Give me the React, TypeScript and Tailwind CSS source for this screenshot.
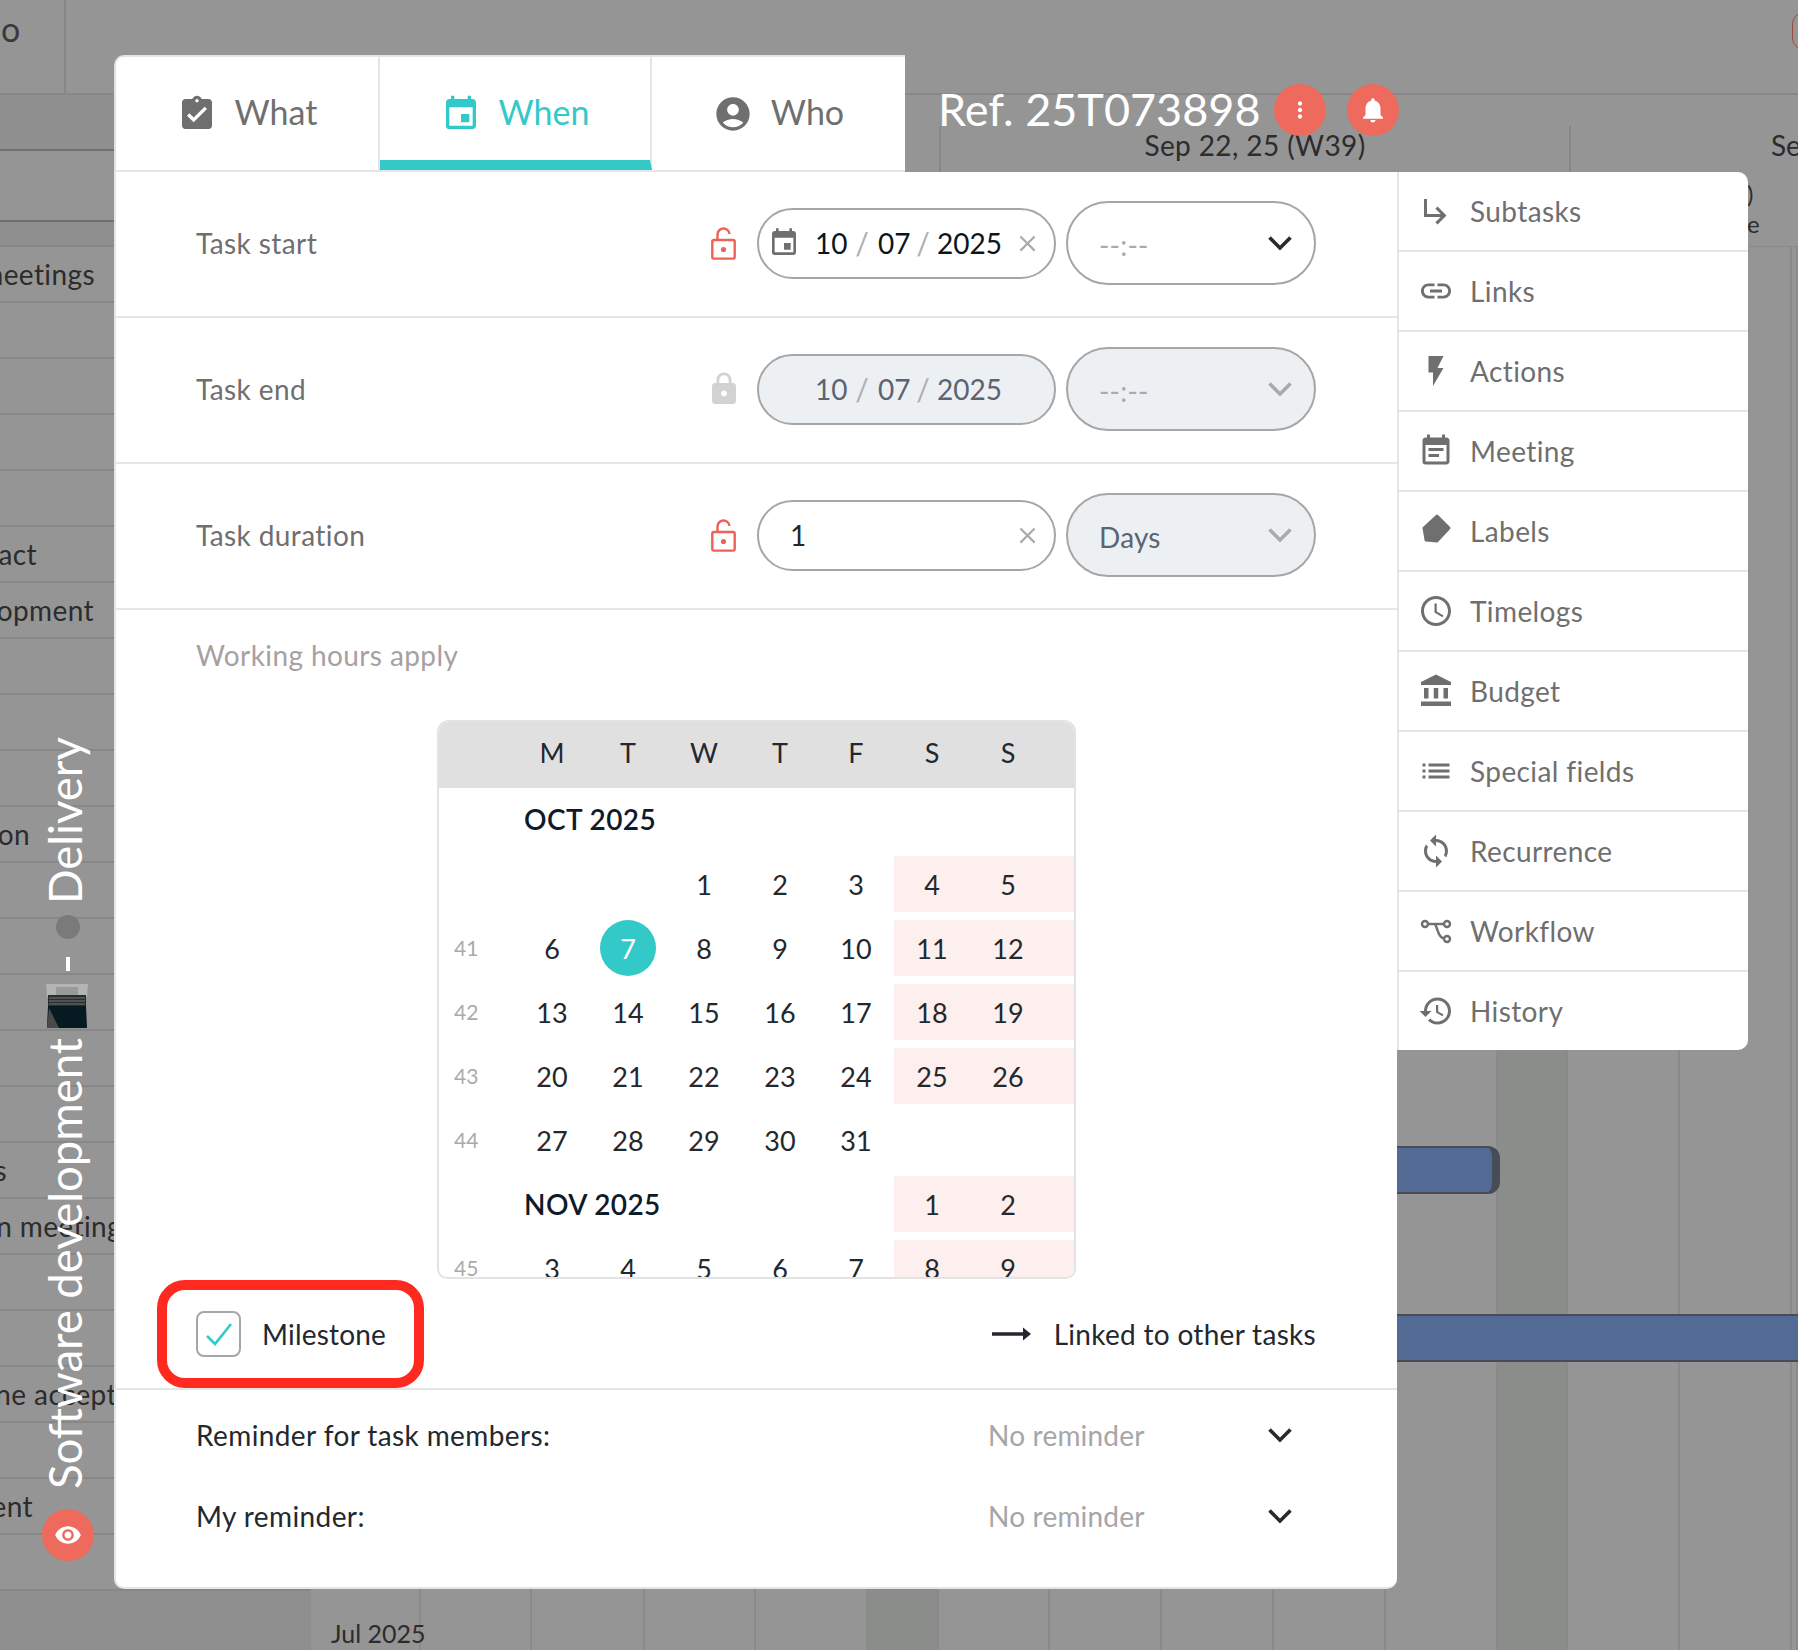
import React from "react";
import {
  MdAssignmentTurnedIn, MdEvent, MdAccountCircle, MdLock, MdSubdirectoryArrowRight, MdLink, MdFlashOn,
  MdEventNote, MdAccessTime, MdAccountBalance, MdList, MdSync, MdHistory, MdMoreVert, MdNotifications,
  MdVisibility, MdClose,
} from "react-icons/md";

const Chevron = ({ c = "#2b2b2b" }: { c?: string }) => (
  <svg width="26" height="18" viewBox="0 0 26 18" fill="none" className="shrink-0">
    <path d="M2.5 3.5 L13 14 L23.5 3.5" stroke={c} strokeWidth="3.6" />
  </svg>
);

const LockOpen = () => (
  <svg width="25" height="33" viewBox="0 0 25 33" fill="none" className="shrink-0">
    <path d="M6.5 13 V8 a6 6 0 0 1 12 -1" stroke="#ee6154" strokeWidth="2.4" />
    <rect x="1.3" y="13" width="22.4" height="18.6" rx="1.6" stroke="#ee6154" strokeWidth="2.4" />
    <circle cx="12.5" cy="22.5" r="2.6" fill="#ee6154" />
  </svg>
);

const LabelIcon = () => (
  <svg width="36" height="36" viewBox="0 0 36 36">
    <path d="M19 3 L31 15 L19 28 L8 27 L6 15 Z" fill="#6f6f6f" stroke="#6f6f6f" strokeWidth="3" strokeLinejoin="round" />
  </svg>
);

const WorkflowIcon = () => (
  <svg width="36" height="36" viewBox="0 0 36 36" fill="none" stroke="#6f6f6f" strokeWidth="2.4">
    <circle cx="7" cy="11" r="3" />
    <circle cx="29" cy="11" r="3" />
    <circle cx="29" cy="26" r="3" />
    <path d="M10 11 H26" />
    <path d="M17 11.5 C20 14 19 24 26 25.5" />
  </svg>
);

const Laptop = () => (
  <svg width="42" height="44" viewBox="0 0 42 44">
    <path d="M0 0 H42 L41 13 H1 Z" fill="#b4b4b4" />
    <rect x="10" y="3" width="22" height="8" fill="#9a9a9a" />
    <path d="M2 11 H40 L40 22 H2 Z" fill="#2a2d30" />
    <path d="M3 14 H39 M3 17 H39 M3 20 H39" stroke="#777" strokeWidth="1" />
    <path d="M2 22 H40 L41 44 H1 Z" fill="#061a22" />
    <path d="M3 24 L13 44 H1 Z" fill="#4a4a4a" />
  </svg>
);

const sideItems: [React.ReactNode, string][] = [
  [<MdSubdirectoryArrowRight size={36} color="#6f6f6f" />, "Subtasks"],
  [<MdLink size={36} color="#6f6f6f" />, "Links"],
  [<MdFlashOn size={36} color="#6f6f6f" />, "Actions"],
  [<MdEventNote size={36} color="#6f6f6f" />, "Meeting"],
  [<LabelIcon />, "Labels"],
  [<MdAccessTime size={36} color="#6f6f6f" />, "Timelogs"],
  [<MdAccountBalance size={36} color="#6f6f6f" />, "Budget"],
  [<MdList size={36} color="#6f6f6f" />, "Special fields"],
  [<MdSync size={36} color="#6f6f6f" />, "Recurrence"],
  [<WorkflowIcon />, "Workflow"],
  [<MdHistory size={36} color="#6f6f6f" />, "History"],
];

const leftRows: [string, string][] = [
  ["Team meetings", "w-[95px]"], ["", ""], ["", ""], ["", ""], ["", ""],
  ["Contact", "w-[37px]"], ["Development", "w-[94px]"], ["", ""], ["", ""], ["", ""],
  ["Definition", "w-[30px]"], ["", ""], ["", ""], ["", ""], ["", ""], ["", ""],
  ["Tests", "w-[7px]"], ["Kick-on meeting", "w-[122px]"], ["", ""],
  ["", ""], ["Online acceptance", "w-[176px]"], ["", ""], ["Deployment", "w-[33px]"], ["", ""],
];

const cols: [string, boolean][] = [
  ["w-[110px]", false], ["w-[111px]", false], ["w-[113px]", false], ["w-[111px]", false], ["w-[112px]", false],
  ["w-[71px]", true], ["w-[111px]", false], ["w-[112px]", false], ["w-[112px]", false], ["w-[112px]", false],
  ["w-[112px]", false], ["w-[70px]", true], ["w-[112px]", false], ["w-[112px]", false], ["w-[6px]", false],
];

type Wk = { w?: string; d: (string | number)[]; we: (string | number)[] };
const weeks: Wk[] = [
  { d: ["", "", 1, 2, 3], we: [4, 5] },
  { w: "41", d: [6, 7, 8, 9, 10], we: [11, 12] },
  { w: "42", d: [13, 14, 15, 16, 17], we: [18, 19] },
  { w: "43", d: [20, 21, 22, 23, 24], we: [25, 26] },
  { w: "44", d: [27, 28, 29, 30, 31], we: [] },
];

const DayCell = ({ v, today }: { v: string | number; today?: boolean }) => (
  <div className="w-[76px] h-full flex items-center justify-center shrink-0">
    {today ? (
      <span className="w-[56px] h-[56px] pt-[2px] rounded-full bg-[#33c9c9] text-white flex items-center justify-center">{v}</span>
    ) : (
      <span className="pt-[2px]">{v}</span>
    )}
  </div>
);

const WeekRow = ({ wk }: { wk: Wk }) => (
  <div className="flex h-[56px] mb-[8px] text-[27px] text-[#23282f]">
    <div className="w-[75px] pl-[15px] flex items-center text-[21px] text-[#aaaaaa] shrink-0">{wk.w}</div>
    {wk.d.map((v, i) => <DayCell key={i} v={v} today={wk.w === "41" && v === 7} />)}
    {wk.we.length > 0 && (
      <div className="flex-1 flex bg-[#fcefed]">{wk.we.map((v, i) => <DayCell key={i} v={v} />)}</div>
    )}
  </div>
);

const Row = ({ label, lock, pill, sel }: { label: string; lock: React.ReactNode; pill: React.ReactNode; sel: React.ReactNode }) => (
  <div className="h-[146px] border-b-2 border-[#e5e5e5] flex items-center pl-[80px] pr-[81px] pb-[2px]">
    <div className="flex-1 text-[28px] tracking-[0.4px] text-[#6f6f6f]">{label}</div>
    <div className="w-[25px] flex justify-center">{lock}</div>
    <div className="ml-[21px] mr-[10px]">{pill}</div>
    {sel}
  </div>
);

const DateText = ({ disabled }: { disabled?: boolean }) => (
  <div className={`flex items-center h-[71px] w-[299px] rounded-full border-2 border-[#a6a6a6] pl-[9px] pr-[13px] text-[28px] ${disabled ? "bg-[#edf0f3] text-[#5a6472]" : "bg-white text-[#0b1520]"}`}>
    <span className="w-[32px] shrink-0 flex">{!disabled && <MdEvent size={32} color="#6f6f6f" />}</span>
    <span className="ml-[15px] w-[31px] text-center">10</span>
    <span className="w-[32px] text-center text-[30px] text-[#b0b0b0]">/</span>
    <span className="w-[31px] text-center">07</span>
    <span className="w-[28px] text-center text-[30px] text-[#b0b0b0]">/</span>
    <span>2025</span>
    {!disabled && <span className="ml-auto flex"><MdClose size={27} color="#aaaaaa" /></span>}
  </div>
);

const Select = ({ children, disabled }: { children: React.ReactNode; disabled?: boolean }) => (
  <div className={`w-[250px] h-[84px] rounded-full border-2 border-[#a6a6a6] flex items-center justify-between pl-[31px] pr-[21px] ${disabled ? "bg-[#edf0f3]" : "bg-white"}`}>
    <span className="text-[28px] tracking-[0.2px] text-[#5a6472] pt-[4px]">{children}</span>
    <Chevron c={disabled ? "#aaaaaa" : "#2b2b2b"} />
  </div>
);

const Dashes = () => <span className="text-[#aaaaaa]">--:--</span>;

export default function App() {
  return (
    <div className="relative w-[1798px] h-[1650px] overflow-hidden bg-[#959595] font-['Lato','Noto_Sans',sans-serif] text-[#2c2c2c]">
      {/* background gantt */}
      <div className="h-[95px] border-b-2 border-[#878787] flex">
        <div className="w-[66px] border-r-2 border-[#878787] text-[34px] pt-[3px] pl-[1px] text-[#3a3a3a]">o</div>
        <div className="flex-1 relative">
          <div className="absolute right-[-18px] top-[12px] w-[24px] h-[38px] rounded-full border border-[#a04a3e]" />
        </div>
      </div>
      <div className="flex h-[1555px]">
        <div className="w-[311px] shrink-0 flex flex-col">
          <div className="h-[56px] bg-[#8f8f8f] border-b-2 border-[#707070]" />
          <div className="h-[71px] border-b-2 border-[#707070]" />
          <div className="h-[25px] bg-[#8f8f8f] border-b-2 border-[#878787]" />
          {leftRows.map(([t, w], i) => (
            <div key={i} className="h-[56px] border-b-2 border-[#878787] flex items-center overflow-hidden text-[28px] tracking-[0.4px] whitespace-nowrap text-[#2c2c2c]">
              {t && <div className={`${w} shrink-0 flex justify-end`}><span className="shrink-0">{t}</span></div>}
            </div>
          ))}
          <div className="flex-1 bg-[#8f8f8f]" />
        </div>
        <div className="flex-1 relative flex flex-col">
          <div className="h-[152px] flex border-b border-[#8a8a8a]">
            <div className="w-[628px] shrink-0" />
            <div className="w-[630px] shrink-0 border-l-2 border-[#878787] mt-[31px] text-center text-[28px] tracking-[0.4px]">
              <span className="block leading-[38px]">Sep 22, 25 (W39)</span>
            </div>
            <div className="flex-1 border-l-2 border-[#878787] mt-[31px] pl-[200px] text-[28px] leading-[38px]">Se</div>
          </div>
          <div className="flex-1 flex">
            {cols.map(([w, dark], i) => (
              <div key={i} className={`${w} shrink-0 border-r-2 border-[#8a8a8a] ${dark ? "bg-[#8b8d8b]" : ""}`} />
            ))}
          </div>
          <div className="absolute left-[20px] top-[1518px] text-[25px] leading-[40px]">Jul 2025</div>
          <div className="absolute left-[800px] top-[1051px] w-[389px] h-[48px] bg-[#526a94] border-2 border-[#474c56] border-r-[8px] rounded-r-[12px]" />
          <div className="absolute left-[800px] top-[1219px] w-[700px] h-[48px] bg-[#526a94] border-y-2 border-[#474c56]" />
          <div className="absolute left-[1436px] top-[84px] text-[24px] leading-[30px] text-[#2c2c2c]">)</div>
          <div className="absolute left-[1436px] top-[114px] text-[24px] leading-[30px] text-[#2c2c2c]">e</div>
        </div>
      </div>

      {/* vertical project title */}
      <div className="absolute left-[40px] top-[738px] w-[56px] flex flex-col items-center text-white text-[45.5px]">
        <span className="mr-[7px] [writing-mode:vertical-rl] rotate-180 leading-[56px] whitespace-nowrap h-[166px] flex items-center">Delivery</span>
        <span className="mt-[11px] w-[24px] h-[24px] rounded-full bg-[#7a7a7a]" />
        <span className="mt-[18px] w-[4px] h-[14px] bg-white" />
        <span className="mt-[13px] flex mr-[3px]"><Laptop /></span>
        <span className="mr-[7px] mt-[11px] [writing-mode:vertical-rl] rotate-180 leading-[56px] whitespace-nowrap h-[450px] flex items-center">Software development</span>
        <span className="mt-[20px] w-[52px] h-[52px] rounded-full bg-[#ee6a5c] flex items-center justify-center">
          <MdVisibility size={28} color="white" />
        </span>
      </div>

      {/* modal */}
      <div className="absolute left-[114px] top-[55px] w-[1634px]">
        <div className="flex h-[117px]">
          <div className="w-[791px] bg-white rounded-tl-[10px] flex border-b-2 border-[#e5e5e5] border-t-2 border-t-[#e5e5e5] border-l-2 border-l-[#e0e0e0]">
            <div className="w-[264px] flex items-center justify-center gap-[16px] border-r-2 border-[#e5e5e5] text-[34px] text-[#6f6f6f]">
              <MdAssignmentTurnedIn size={40} color="#6f6f6f" /><span className="pb-[4px] ml-[2px]">What</span>
            </div>
            <div className="w-[272px] pt-[10px] flex items-center justify-center gap-[16px] border-r-2 border-[#e5e5e5] text-[34px] text-[#33c9c9] border-b-[10px] border-b-[#33c9c9]">
              <MdEvent size={40} color="#33c9c9" /><span className="pb-[4px] ml-[2px]">When</span>
            </div>
            <div className="flex-1 flex items-center justify-center gap-[18px] text-[34px] text-[#6f6f6f]">
              <MdAccountCircle size={40} color="#6f6f6f" /><span className="pb-[4px]">Who</span>
            </div>
          </div>
          <div className="flex items-center pb-[8px] ml-[33px] text-white">
            <span className="text-[45px] w-[336px] whitespace-nowrap">Ref. 25T073898</span>
            <span className="w-[52px] h-[52px] rounded-full bg-[#ee6a5c] flex items-center justify-center"><MdMoreVert size={26} color="white" /></span>
            <span className="ml-[21px] w-[52px] h-[52px] rounded-full bg-[#ee6a5c] flex items-center justify-center"><MdNotifications size={30} color="white" /></span>
          </div>
        </div>
        <div className="flex items-start">
          <div className="w-[1283px] h-[1417px] bg-white rounded-b-[10px] border-l-2 border-b-2 border-[#e5e5e5] flex flex-col">
            <Row label="Task start" lock={<LockOpen />} pill={<DateText />} sel={<Select><Dashes /></Select>} />
            <Row label="Task end" lock={<MdLock size={36} color="#d2d2d2" className="shrink-0" />} pill={<DateText disabled />} sel={<Select disabled><Dashes /></Select>} />
            <Row label="Task duration" lock={<LockOpen />}
              pill={
                <div className="flex items-center h-[71px] w-[299px] rounded-full border-2 border-[#a6a6a6] pl-[31px] pr-[13px] text-[28px] text-[#23282f]">
                  <span>1</span><span className="ml-auto flex"><MdClose size={27} color="#aaaaaa" /></span>
                </div>
              }
              sel={<Select disabled>Days</Select>} />
            <div className="pl-[80px] pt-[27px] h-[36px] box-content text-[28px] tracking-[0.4px] leading-[36px] text-[#a8a0a0]">Working hours apply</div>
            <div className="ml-[321px] mt-[47px] w-[639px] h-[559px] rounded-t-[12px] rounded-b-[10px] border-2 border-[#e3e3e3] overflow-hidden shrink-0">
              <div className="h-[66px] pb-[6px] bg-[#e0e0e0] flex items-center text-[27px] text-[#23282f]">
                <div className="w-[75px] shrink-0" />
                {["M", "T", "W", "T", "F", "S", "S"].map((d, i) => <DayCell key={i} v={d} />)}
              </div>
              <div className="h-[68px] pl-[85px] pb-[6px] flex items-center text-[28px] tracking-[0.4px] font-semibold text-[#0d1b2a]">OCT 2025</div>
              {weeks.map((wk, i) => <WeekRow key={i} wk={wk} />)}
              <div className="flex h-[56px] mb-[8px] text-[27px] text-[#23282f]">
                <div className="w-[85px] shrink-0" />
                <div className="w-[370px] shrink-0 flex items-center text-[28px] tracking-[0.4px] font-semibold text-[#0d1b2a]">NOV 2025</div>
                <div className="flex-1 flex bg-[#fcefed]"><DayCell v={1} /><DayCell v={2} /></div>
              </div>
              <WeekRow wk={{ w: "45", d: [3, 4, 5, 6, 7], we: [8, 9] }} />
            </div>
            <div className="flex items-center justify-between pl-[41px] pr-[81px] h-[108px] shrink-0 mt-[1px]">
              <div className="w-[267px] h-[108px] border-[10px] border-[#ff2a1f] rounded-[28px] flex items-center pl-[29px] gap-[21px]">
                <span className="w-[45px] h-[46px] rounded-[8px] border-2 border-[#a6a6a6] flex items-center justify-center">
                  <svg width="30" height="26" viewBox="0 0 30 26" fill="none"><path d="M3 15 L11 23 L27 3" stroke="#33c9c9" strokeWidth="2.6" /></svg>
                </span>
                <span className="text-[28px] tracking-[0.2px] text-[#23282f]">Milestone</span>
              </div>
              <div className="flex items-center gap-[23px] text-[28px] tracking-[0.3px] text-[#23282f]">
                <svg width="39" height="16" viewBox="0 0 39 16"><path d="M0 8 H33" stroke="#23282f" strokeWidth="3.5" /><path d="M31 1.5 L39 8 L31 14.5 Z" fill="#23282f" /></svg>
                <span>Linked to other tasks</span>
              </div>
            </div>
            <div className="border-t-2 border-[#e5e5e5] pt-[4px] flex flex-col text-[28px] tracking-[0.4px]">
              {["Reminder for task members:", "My reminder:"].map((t) => (
                <div key={t} className="h-[81px] flex items-center pl-[80px] pr-[104px]">
                  <span className="w-[792px] text-[#23282f]">{t}</span>
                  <span className="flex-1 text-[#a6a6a6] tracking-[0.2px]">No reminder</span>
                  <Chevron />
                </div>
              ))}
            </div>
          </div>
          <div className="w-[351px] bg-white rounded-r-[10px] border-l-2 border-[#e5e5e5] flex flex-col">
            {sideItems.map(([ic, t], i) => (
              <div key={t} className={`flex items-center pl-[19px] gap-[16px] text-[28px] tracking-[0.4px] text-[#6f6f6f] ${i < 10 ? "h-[80px] border-b-2 border-[#e5e5e5]" : "h-[78px]"}`}>
                <span className="w-[36px] flex justify-center shrink-0">{ic}</span>
                <span>{t}</span>
              </div>
            ))}
          </div>
        </div>
      </div>
    </div>
  );
}
